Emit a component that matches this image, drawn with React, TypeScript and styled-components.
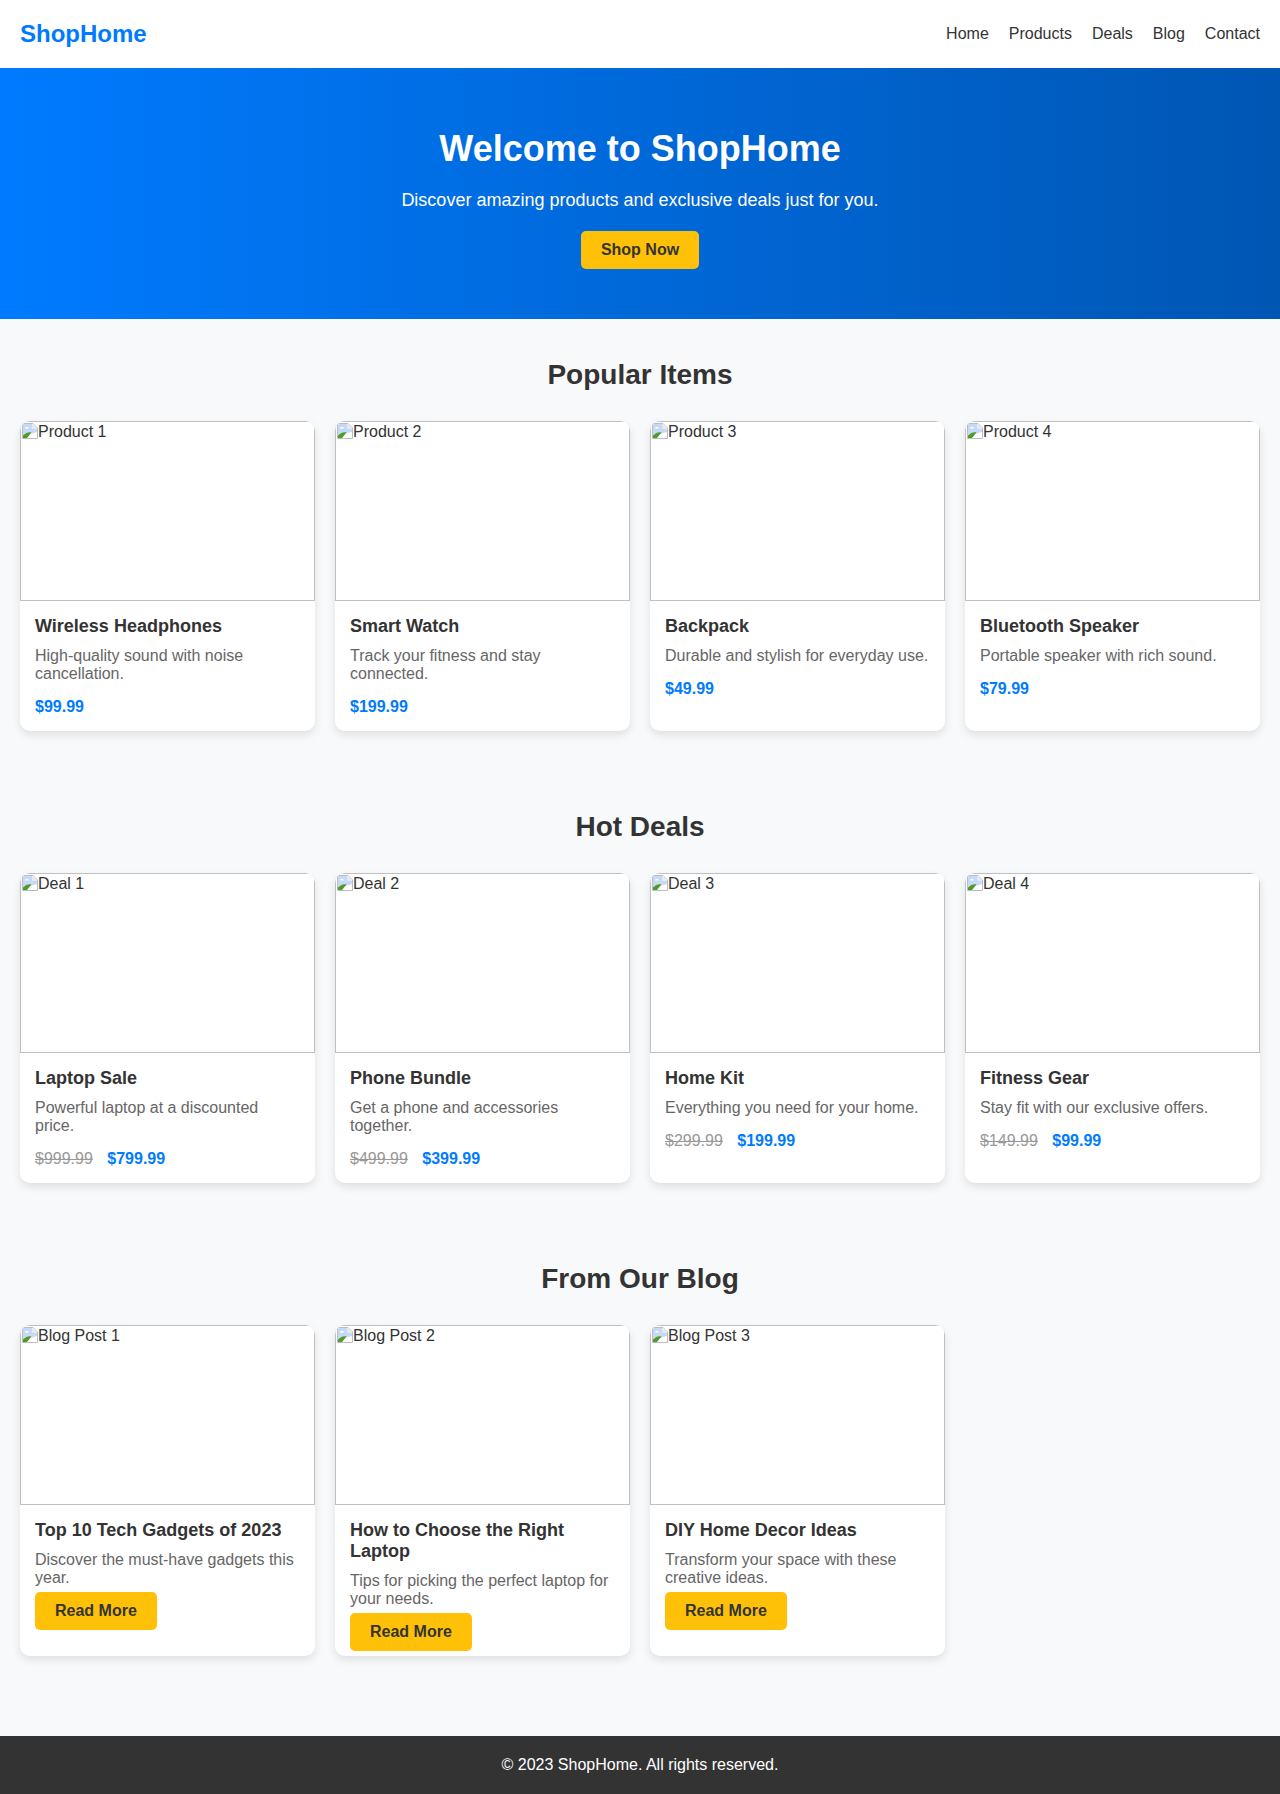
import React from "react";
import styled, { createGlobalStyle } from "styled-components";

const Global = createGlobalStyle`
  html, body { margin: 0; padding: 0; }
  body {
    font-family: Arial, "Liberation Sans", sans-serif;
    font-size: 16px;
    color: #333;
    background: #f8f9fa;
  }
`;

const Header = styled.header`
  display: flex;
  justify-content: space-between;
  align-items: center;
  height: 68px;
  padding: 0 20px;
  background: #fff;
`;
const Logo = styled.div`
  font-size: 24px;
  font-weight: 700;
  color: #007bff;
`;
const Nav = styled.nav`
  display: flex;
  gap: 20px;
`;
const NavLink = styled.a`
  color: #333;
  text-decoration: none;
`;
const Hero = styled.section`
  height: 251px;
  box-sizing: border-box;
  padding-top: 60px;
  text-align: center;
  color: #fff;
  background: linear-gradient(90deg, #007bff, #0056b3);
`;
const HeroTitle = styled.h1`
  margin: 0 0 20px;
  font-size: 36px;
  font-weight: 700;
`;
const HeroText = styled.p`
  margin: 0 0 20px;
  font-size: 18px;
`;
const ActionButton = styled.a`
  display: inline-block;
  padding: 10px 20px;
  border-radius: 5px;
  background: #ffc107;
  color: #333;
  font-weight: 700;
  text-decoration: none;
`;
const Main = styled.main`
  padding-bottom: 40px;
`;
const Section = styled.section`
  padding: 40px 20px;
`;
const SectionTitle = styled.h2`
  margin: 0 0 30px;
  text-align: center;
  font-size: 28px;
  font-weight: 700;
  color: #333;
`;
const Grid = styled.div`
  display: grid;
  grid-template-columns: repeat(4, 295px);
  gap: 20px;
`;
const Card = styled.article`
  overflow: hidden;
  border-radius: 10px;
  background: #fff;
  box-shadow: 0 4px 8px rgba(0, 0, 0, 0.1);
`;
const BrokenImage = styled.div`
  box-sizing: border-box;
  height: 180px;
  padding: 1px;
  border: 1px solid #c0c0c0;
  display: flex;
  align-items: flex-start;
  color: #333;
`;
const BrokenIcon = styled.svg`
  flex: none;
  width: 16px;
  height: 16px;
`;
const CardBody = styled.div`
  padding: 15px 15px 5px;
`;
const CardTitle = styled.h3`
  margin: 0 0 10px;
  font-size: 18px;
  font-weight: 700;
  color: #333;
`;
const CardText = styled.p`
  margin: 0;
  color: #666;
`;
const Price = styled.div`
  margin: 15px 0 10px;
  font-weight: 700;
  color: #007bff;
`;
const OldPrice = styled.span`
  margin-right: 10px;
  font-weight: 400;
  color: #999;
  text-decoration: line-through;
`;
const ButtonRow = styled.div`
  margin-top: 5px;
`;
const Footer = styled.footer`
  padding: 20px;
  background: #333;
  color: #fff;
  text-align: center;
`;

const Broken = ({ alt }: { alt: string }) => (
  <BrokenImage>
    <BrokenIcon viewBox="0 0 16 16" aria-hidden="true">
      <path d="M0.5 0.5H11L15.5 5V15.5H0.5Z" fill="#fff" stroke="#b9bdc2" />
      <path d="M1 1H10.5V5.5H15V9L1 13Z" fill="#c6d9f7" />
      <path d="M3 5.5C3.5 3.6 6.5 3.6 7 5.5Z" fill="#fff" />
      <path d="M1 15V12.5C4 9.5 7 8.5 9.5 9.5L5 15Z" fill="#4f9a2a" />
      <path d="M9 15L15 9.5V12L12 15Z" fill="#fff" />
      <path d="M11 1L15 5H11Z" fill="#e8eaed" />
    </BrokenIcon>
    {alt}
  </BrokenImage>
);

const products = [
  ["Product 1", "Wireless Headphones", "High-quality sound with noise cancellation.", "$99.99"],
  ["Product 2", "Smart Watch", "Track your fitness and stay connected.", "$199.99"],
  ["Product 3", "Backpack", "Durable and stylish for everyday use.", "$49.99"],
  ["Product 4", "Bluetooth Speaker", "Portable speaker with rich sound.", "$79.99"],
];
const deals = [
  ["Deal 1", "Laptop Sale", "Powerful laptop at a discounted price.", "$999.99", "$799.99"],
  ["Deal 2", "Phone Bundle", "Get a phone and accessories together.", "$499.99", "$399.99"],
  ["Deal 3", "Home Kit", "Everything you need for your home.", "$299.99", "$199.99"],
  ["Deal 4", "Fitness Gear", "Stay fit with our exclusive offers.", "$149.99", "$99.99"],
];
const posts = [
  ["Blog Post 1", "Top 10 Tech Gadgets of 2023", "Discover the must-have gadgets this year."],
  ["Blog Post 2", "How to Choose the Right Laptop", "Tips for picking the perfect laptop for your needs."],
  ["Blog Post 3", "DIY Home Decor Ideas", "Transform your space with these creative ideas."],
];

export default function App() {
  return (
    <>
      <Global />
      <Header>
        <Logo>ShopHome</Logo>
        <Nav>
          {["Home", "Products", "Deals", "Blog", "Contact"].map((n) => (
            <NavLink key={n} href="#">{n}</NavLink>
          ))}
        </Nav>
      </Header>
      <Hero>
        <HeroTitle>Welcome to ShopHome</HeroTitle>
        <HeroText>Discover amazing products and exclusive deals just for you.</HeroText>
        <ActionButton href="#">Shop Now</ActionButton>
      </Hero>
      <Main>
        <Section>
          <SectionTitle>Popular Items</SectionTitle>
          <Grid>
            {products.map(([alt, title, text, price]) => (
              <Card key={alt}>
                <Broken alt={alt} />
                <CardBody>
                  <CardTitle>{title}</CardTitle>
                  <CardText>{text}</CardText>
                  <Price>{price}</Price>
                </CardBody>
              </Card>
            ))}
          </Grid>
        </Section>
        <Section>
          <SectionTitle>Hot Deals</SectionTitle>
          <Grid>
            {deals.map(([alt, title, text, old, price]) => (
              <Card key={alt}>
                <Broken alt={alt} />
                <CardBody>
                  <CardTitle>{title}</CardTitle>
                  <CardText>{text}</CardText>
                  <Price>
                    <OldPrice>{old}</OldPrice> {price}
                  </Price>
                </CardBody>
              </Card>
            ))}
          </Grid>
        </Section>
        <Section>
          <SectionTitle>From Our Blog</SectionTitle>
          <Grid>
            {posts.map(([alt, title, text]) => (
              <Card key={alt}>
                <Broken alt={alt} />
                <CardBody>
                  <CardTitle>{title}</CardTitle>
                  <CardText>{text}</CardText>
                  <ButtonRow>
                    <ActionButton href="#">Read More</ActionButton>
                  </ButtonRow>
                </CardBody>
              </Card>
            ))}
          </Grid>
        </Section>
      </Main>
      <Footer>© 2023 ShopHome. All rights reserved.</Footer>
    </>
  );
}
